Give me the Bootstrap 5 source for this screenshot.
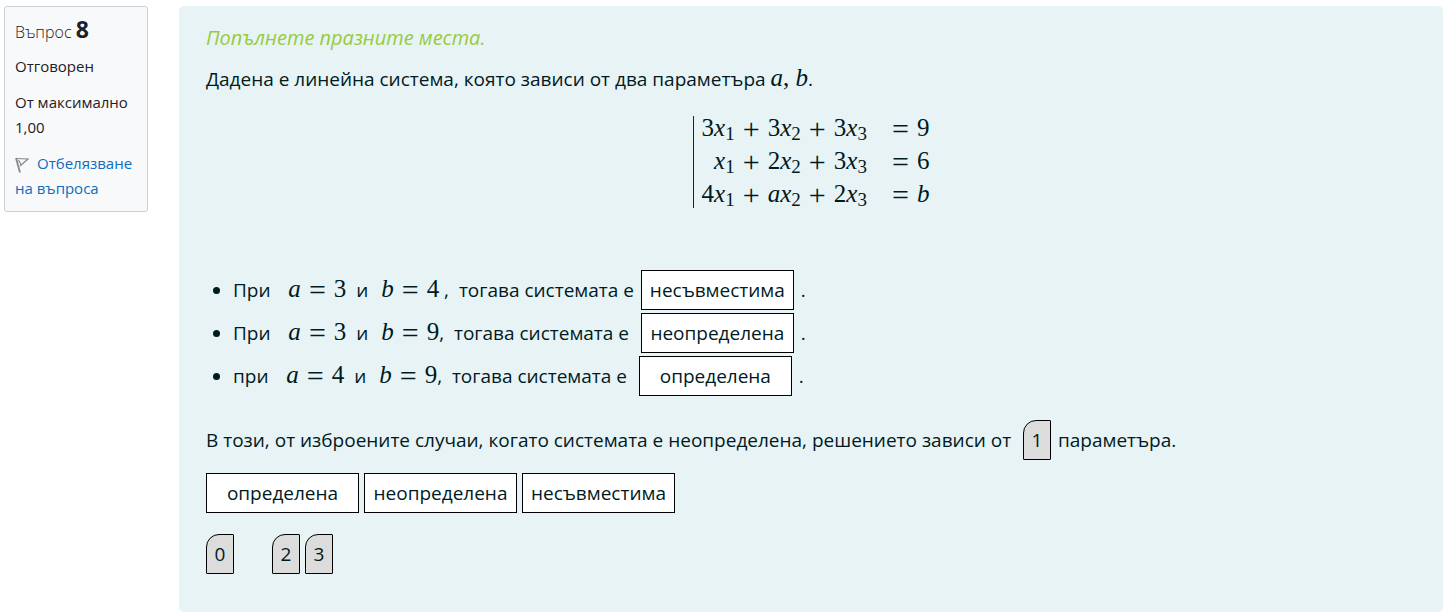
<!DOCTYPE html>
<html lang="bg">
<head>
<meta charset="utf-8">
<meta name="viewport" content="width=device-width, initial-scale=1">
<title>Въпрос 8</title>
<link rel="stylesheet" href="https://cdn.jsdelivr.net/npm/bootstrap@5.3.0/dist/css/bootstrap.min.css">
<style>
body { font-family: "Open Sans", "Noto Sans", sans-serif; font-size: 19px; line-height: 30px; color: #001a1e; }
.page-pad { padding: 6px 6px 3px 4px; gap: 31px; }
.info { flex: 0 0 144px; font-size: 15px; line-height: 25px; color: #1d2125; background: #f8f9fa; border: 1px solid #cad0d7; border-radius: 3px; padding: 12px 10px 10px; }
.info h3 { font-size: 16px; line-height: 25px; font-weight: 300; margin-bottom: 9px; }
.info .qno { font-size: 23px; line-height: 20px; font-weight: 700; }
.info p { margin-bottom: 11px; }
.info a { color: #0f6cbf; }
.formulation { min-width: 0; background: #e7f3f5; border-radius: 5px; padding: 17px 27px 38px; }
.hint { color: #98ca3f; font-size: 20px; font-style: italic; margin-bottom: 11px; }
.intro { margin-bottom: 18px; }
.math { font-family: "Liberation Serif", serif; font-size: 25px; line-height: 24px; white-space: nowrap; }
.math sub { font-size: 19px; bottom: -4px; line-height: 0; }
.op { display: inline-block; width: 33px; text-align: center; font-size: 30px; line-height: 24px; vertical-align: -3px; }
.system { gap: 8px; margin-bottom: 59px; }
.bar { width: 1px; height: 92px; background: #00189a; }
.system td { padding: 0; height: 33px; vertical-align: middle; }
.system .lhs { text-align: right; padding-right: 17px; }
.answers { padding-left: 27px; margin-bottom: 24px; }
.answers li { height: 40px; margin-bottom: 3px; line-height: 40px; white-space: pre; }
.answers .math { margin-left: 3px; }
.answers .choice, .after .choice { margin: 0 2px; }
.choice { font: inherit; line-height: 38px; width: 153px; height: 40px; padding: 0; border: 1px solid #000; background: #fff; color: inherit; text-align: center; vertical-align: top; }
.numeral { width: 28px; background: #dcdcdc; border-radius: 13px 1px 1px 1px; }
.after { line-height: 40px; margin-bottom: 13px; }
.words { gap: 5px; margin-bottom: 21px; }
.numbers { gap: 5px; }
.blank { width: 28px; }
</style>
<script src="https://cdn.jsdelivr.net/npm/bootstrap@5.3.0/dist/js/bootstrap.bundle.min.js"></script>
</head>
<body>
<main class="page-pad d-flex align-items-start">
  <aside class="info">
    <h3>Въпрос <span class="qno">8</span></h3>
    <p>Отговорен</p>
    <p>От максимално 1,00</p>
    <a href="#" class="text-decoration-none"><svg class="me-2" width="14" height="16" viewBox="0 0 14 16" fill="none" stroke="#888" aria-hidden="true"><path d="M1 1L5 15.500" stroke-width="1.800"/><path d="M1 1.500L13 2L5 9M3.500 3L6 7.500" stroke-width="1.200"/></svg>Отбелязване на въпроса</a>
  </aside>
  <section class="formulation flex-grow-1">
    <p class="hint">Попълнете празните места.</p>
    <p class="intro">Дадена е линейна система, която зависи от два параметъра <span class="math"><i>a</i>, <i>b</i></span>.</p>
    <div class="system d-flex justify-content-center align-items-center">
      <span class="bar"></span>
      <table class="math">
        <tr><td class="lhs">3<i>x</i><sub>1</sub><span class="op">+</span>3<i>x</i><sub>2</sub><span class="op">+</span>3<i>x</i><sub>3</sub></td><td><span class="op">=</span>9</td></tr>
        <tr><td class="lhs"><i>x</i><sub>1</sub><span class="op">+</span>2<i>x</i><sub>2</sub><span class="op">+</span>3<i>x</i><sub>3</sub></td><td><span class="op">=</span>6</td></tr>
        <tr><td class="lhs">4<i>x</i><sub>1</sub><span class="op">+</span><i>ax</i><sub>2</sub><span class="op">+</span>2<i>x</i><sub>3</sub></td><td><span class="op">=</span><i>b</i></td></tr>
      </table>
    </div>
    <ul class="answers">
      <li>При &nbsp; <span class="math"><i>a</i><span class="op">=</span>3</span>&nbsp; и &nbsp;<span class="math"><i>b</i><span class="op">=</span>4</span> ,&nbsp; тогава системата е <button type="button" class="choice">несъвместима</button> .</li>
      <li>При &nbsp; <span class="math"><i>a</i><span class="op">=</span>3</span>&nbsp; и &nbsp;<span class="math"><i>b</i><span class="op">=</span>9</span>,&nbsp; тогава системата е&nbsp; <button type="button" class="choice">неопределена</button> .</li>
      <li>при &nbsp; <span class="math"><i>a</i><span class="op">=</span>4</span>&nbsp; и &nbsp;<span class="math"><i>b</i><span class="op">=</span>9</span>,&nbsp; тогава системата е&nbsp; <button type="button" class="choice">определена</button> .</li>
    </ul>
    <p class="after">В този, от изброените случаи, когато системата е неопределена, решението зависи от&nbsp; <button type="button" class="choice numeral">1</button> параметъра.</p>
    <div class="words d-flex flex-wrap">
      <button type="button" class="choice">определена</button>
      <button type="button" class="choice">неопределена</button>
      <button type="button" class="choice">несъвместима</button>
    </div>
    <div class="numbers d-flex">
      <button type="button" class="choice numeral">0</button>
      <span class="blank"></span>
      <button type="button" class="choice numeral">2</button>
      <button type="button" class="choice numeral">3</button>
    </div>
  </section>
</main>
</body>
</html>
